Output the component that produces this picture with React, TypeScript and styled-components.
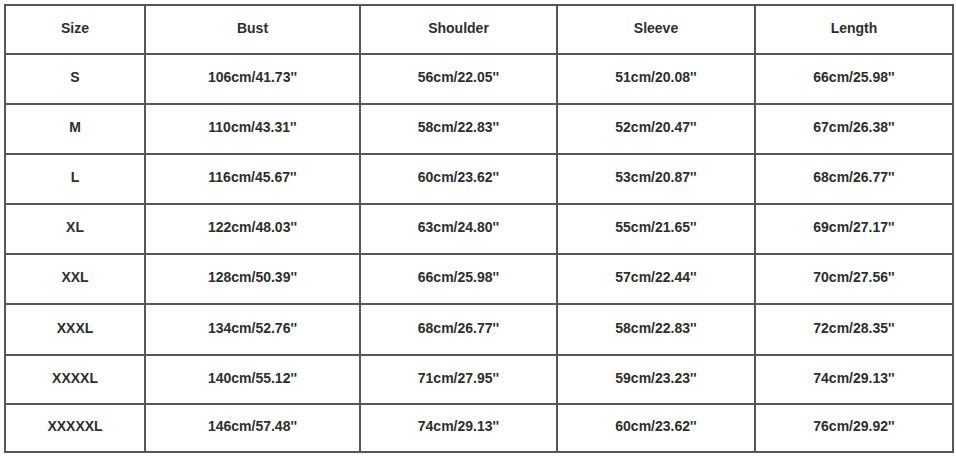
import React from 'react';
import styled, { createGlobalStyle } from 'styled-components';

const GlobalStyle = createGlobalStyle`
  body {
    margin: 0;
    background: #ffffff;
    font-family: 'Liberation Sans', Arial, sans-serif;
  }
`;

const headers = ['Size', 'Bust', 'Shoulder', 'Sleeve', 'Length'];

const rows = [
  ['S', '106cm/41.73\'\'', '56cm/22.05\'\'', '51cm/20.08\'\'', '66cm/25.98\'\''],
  ['M', '110cm/43.31\'\'', '58cm/22.83\'\'', '52cm/20.47\'\'', '67cm/26.38\'\''],
  ['L', '116cm/45.67\'\'', '60cm/23.62\'\'', '53cm/20.87\'\'', '68cm/26.77\'\''],
  ['XL', '122cm/48.03\'\'', '63cm/24.80\'\'', '55cm/21.65\'\'', '69cm/27.17\'\''],
  ['XXL', '128cm/50.39\'\'', '66cm/25.98\'\'', '57cm/22.44\'\'', '70cm/27.56\'\''],
  ['XXXL', '134cm/52.76\'\'', '68cm/26.77\'\'', '58cm/22.83\'\'', '72cm/28.35\'\''],
  ['XXXXL', '140cm/55.12\'\'', '71cm/27.95\'\'', '59cm/23.23\'\'', '74cm/29.13\'\''],
  ['XXXXXL', '146cm/57.48\'\'', '74cm/29.13\'\'', '60cm/23.62\'\'', '76cm/29.92\'\''],
];

const SizeChart = () => {
  return (
    <Page>
      <Grid>
        {headers.map((h) => (
          <Cell key={h}>{h}</Cell>
        ))}
        {rows.map((row) =>
          row.map((value, i) => <Cell key={row[0] + i}>{value}</Cell>)
        )}
      </Grid>
    </Page>
  );
};

export default function App() {
  return (
    <>
      <GlobalStyle />
      <SizeChart />
    </>
  );
}

const Page = styled.div`
  width: 956px;
  height: 457px;
  padding: 4px 0 0 4px;
  box-sizing: border-box;
  background: #ffffff;
`;

const Grid = styled.div`
  display: grid;
  width: 950px;
  grid-template-columns: 138px 213px 195px 196px 196px;
  grid-template-rows: 47px 48px 48px 48px 48px 48px 49px 47px 46px;
  gap: 2px;
  padding: 2px;
  box-sizing: border-box;
  background: #575757;
`;

const Cell = styled.div`
  display: flex;
  align-items: center;
  justify-content: center;
  padding-bottom: 4px;
  box-sizing: border-box;
  background: #ffffff;
  color: #2e2e2e;
  font-size: 14px;
  font-weight: 700;
`;
